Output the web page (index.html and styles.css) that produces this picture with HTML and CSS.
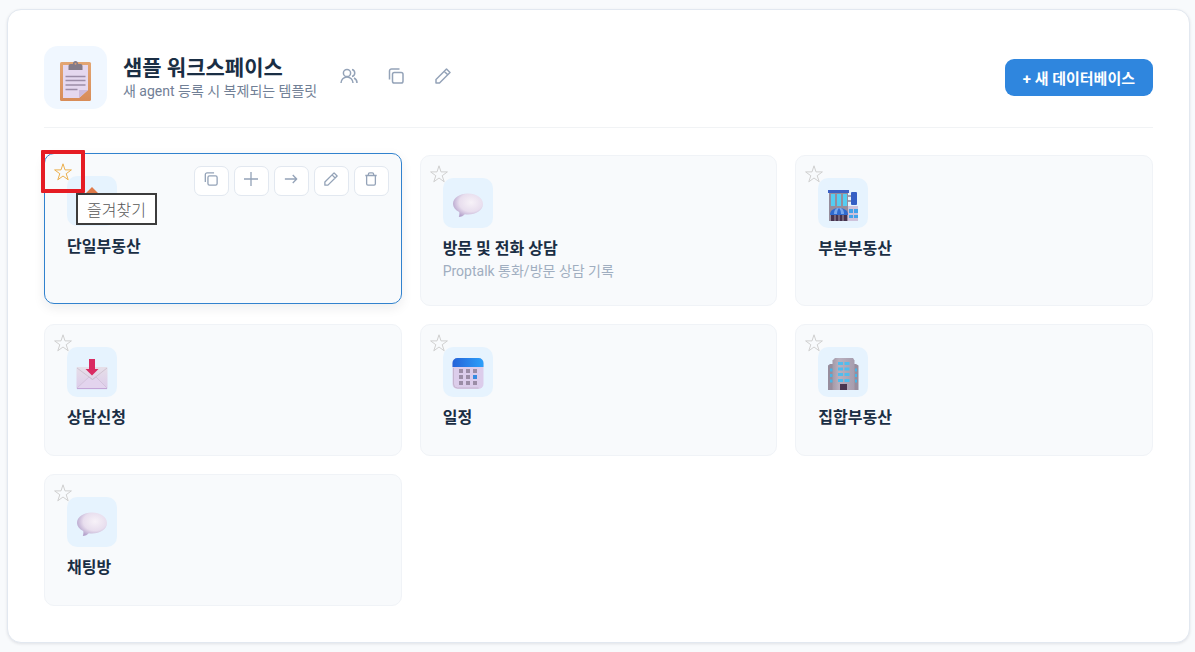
FILE: index.html
```
<!DOCTYPE html>
<html lang="ko">
<head>
  <meta charset="UTF-8">
  <meta name="viewport" content="width=device-width, initial-scale=1.0">
  <title>샘플 워크스페이스</title>
  <link rel="stylesheet" href="styles.css">
</head>
<body>

  <!-- shared icons -->
  <svg class="sprite" aria-hidden="true">
    <defs>
      <radialGradient id="bubbleFill" cx="0.6" cy="0.38" r="0.65">
        <stop offset="0" stop-color="#f7f2f8"/>
        <stop offset="0.6" stop-color="#e8deee"/>
        <stop offset="1" stop-color="#b5a3cc"/>
      </radialGradient>
      <linearGradient id="calTop"><stop offset="0" stop-color="#2563d8"/><stop offset="1" stop-color="#2ba0fa"/></linearGradient>
      <linearGradient id="mailFill" x2="0" y2="1"><stop offset="0" stop-color="#e6dfe8"/><stop offset="1" stop-color="#dccbea"/></linearGradient>
      <linearGradient id="wall"><stop offset="0" stop-color="#a39aa8"/><stop offset="0.3" stop-color="#b9b0bf"/><stop offset="1" stop-color="#a69cad"/></linearGradient>
      <linearGradient id="board" x2="0" y2="1"><stop offset="0" stop-color="#e3a673"/><stop offset="1" stop-color="#d88c58"/></linearGradient>
    </defs>
    <symbol id="star" viewBox="0 0 20 20"><path d="M10 1.8l2 6.1h6.400l-5.200 3.800 2 6.100-5.200-3.800-5.200 3.800 2-6.100-5.200-3.800H8z"/></symbol>
    <symbol id="copy" viewBox="0 0 16 16"><rect x="4.5" y="4.5" width="10.5" height="10.5" rx="1.8"/><path d="M1.5 11.5V3a2 2 0 0 1 2-2h8"/></symbol>
    <symbol id="edit" viewBox="0 0 16 16"><path d="M1 15v-3.500L11.500 1 15 4.500 4.500 15zM9.200 3.300l3.500 3.500"/></symbol>
    <symbol id="plus" viewBox="0 0 16 16"><path d="M8 0v16M0 8h16"/></symbol>
    <symbol id="arrow" viewBox="0 0 16 16"><path d="M1 8h13.500M10 3.500L14.500 8 10 12.500"/></symbol>
    <symbol id="trash" viewBox="0 0 16 16"><path d="M1.500 4h13M3 4v9.500a1.500 1.500 0 0 0 1.500 1.500h7a1.500 1.500 0 0 0 1.500-1.500V4M5 4V2.500A1.500 1.500 0 0 1 6.500 1h3A1.500 1.500 0 0 1 11 2.500V4"/></symbol>
    <symbol id="bubble" viewBox="0 0 32 32"><path fill="url(#bubbleFill)" d="M16 4.500C24.300 4.500 31 9 31 15s-6.700 10.500-15 10.500c-1 0-2.200 0-3.200-.3-1.300 1.600-3.600 2.600-6 2.900.6-1.500.8-3.300.4-5C3.500 21 1 18.200 1 15 1 9 7.700 4.500 16 4.500z"/></symbol>
  </svg>

  <main class="panel">
    <header class="workspace-header">
      <div class="workspace-icon">
        <svg viewBox="0 0 32 42" width="32" height="42">
          <rect x="0" y="3" width="31" height="39" rx="1.500" fill="url(#board)"/>
          <path d="M3 6h25v25l-9 8H3z" fill="#e5d8ef"/>
          <path d="M19 31h9l-9 8z" fill="#cdbbdb"/>
          <path d="M5.500 17.500h20M5.500 21.500h20M5.500 26h20M5.500 30.500h12" stroke="#9c8da8" stroke-width="1.300"/>
          <path d="M8.500 11V7q0-2 2-2h2.300C13 3 14 2 15.500 2S18 3 18.200 5h2.300q2 0 2 2v4z" fill="#837b88"/>
          <circle cx="15.500" cy="4.800" r="1" fill="#d49c77"/>
        </svg>
      </div>
      <div class="workspace-info">
        <h1>샘플 워크스페이스</h1>
        <p>새 agent 등록 시 복제되는 템플릿</p>
      </div>
      <div class="workspace-actions">
        <button type="button" aria-label="멤버"><svg class="icon users" viewBox="0 0 18 16"><circle cx="7" cy="5" r="3.600"/><path d="M1 15a6 6 0 0 1 12 0M12 1.500a3.600 3.600 0 0 1 0 7M14 10a5.500 5.500 0 0 1 3 5"/></svg></button>
        <button type="button" aria-label="복제"><svg class="icon"><use href="#copy"/></svg></button>
        <button type="button" aria-label="수정"><svg class="icon"><use href="#edit"/></svg></button>
      </div>
      <button type="button" class="btn-primary">+ 새 데이터베이스</button>
    </header>

    <section class="cards">
      <article class="card active">
        <button type="button" class="favorite" aria-label="즐겨찾기"><svg><use href="#star"/></svg></button>
        <div class="card-actions">
          <button type="button" aria-label="복제"><svg class="icon"><use href="#copy"/></svg></button>
          <button type="button" aria-label="추가"><svg class="icon"><use href="#plus"/></svg></button>
          <button type="button" aria-label="이동"><svg class="icon"><use href="#arrow"/></svg></button>
          <button type="button" aria-label="수정"><svg class="icon"><use href="#edit"/></svg></button>
          <button type="button" aria-label="삭제"><svg class="icon"><use href="#trash"/></svg></button>
        </div>
        <div class="card-icon">
          <svg viewBox="0 0 32 32"><path d="M6 14h20v16H6z" fill="#f4e4dc"/><path d="M16 0L31 15l-2 2L16 6 3 17l-2-2z" fill="#e07a4a"/><path d="M13 20h6v10h-6z" fill="#9c6750"/></svg>
        </div>
        <h2>단일부동산</h2>
        <span class="focus-box"></span>
        <span class="tooltip" role="tooltip">즐겨찾기</span>
      </article>

      <article class="card">
        <button type="button" class="favorite" aria-label="즐겨찾기"><svg><use href="#star"/></svg></button>
        <div class="card-icon"><svg><use href="#bubble"/></svg></div>
        <h2>방문 및 전화 상담</h2>
        <p>Proptalk 통화/방문 상담 기록</p>
      </article>

      <article class="card">
        <button type="button" class="favorite" aria-label="즐겨찾기"><svg><use href="#star"/></svg></button>
        <div class="card-icon">
          <svg viewBox="0 0 32 32">
            <path d="M2 2h19v30H2z" fill="#968d9c"/>
            <path d="M21 17h10v15H21z" fill="#cec2db"/>
            <path d="M1 1h21v3H1z" fill="#3d61c4"/>
            <path d="M4 5h4v12H4zM10 5h4v12h-4zM16 5h4v12h-4z" fill="#55cdf2"/>
            <path d="M21 7h4M21 12h4" stroke="#594b66"/>
            <rect x="24" y="3" width="6" height="13" rx="1" fill="#345ec4"/>
            <path d="M4 26h16v6H4z" fill="#46334f"/>
            <path d="M8 26v6M12 26v6M16 26v6" stroke="#a39aa8"/>
            <path d="M3 26c0-5 4-7 9-7s9 2 9 7z" fill="#2f6bd0"/>
            <path d="M7 25c0-3 1-5 3-6h4c2 1 3 3 3 6h-3c0-3-1-5-2-6-1 1-2 3-2 6z" fill="#79a8ed"/>
            <path d="M22 20h4v4h-4zM27 20h4v4h-4zM22 26h4v3h-4zM27 26h4v3h-4z" fill="#42a3ea"/>
          </svg>
        </div>
        <h2>부분부동산</h2>
      </article>

      <article class="card">
        <button type="button" class="favorite" aria-label="즐겨찾기"><svg><use href="#star"/></svg></button>
        <div class="card-icon">
          <svg viewBox="0 0 32 32">
            <rect x="0.500" y="9" width="31" height="22" rx="1" fill="url(#mailFill)"/>
            <path d="M1 30L13 19l3.500 2.500L20 19l11 11" fill="#e3d4ee" stroke="#cdbdd5" stroke-width="0.700"/>
            <path d="M1 10l15.500 11.500L31 10" fill="none" stroke="#c9bcca" stroke-width="0.800"/>
            <path d="M1 30.600h30" stroke="#c0a2d6"/>
            <path d="M13 1h6v10h3.500L16 17.500 9.500 11H13z" fill="#d92b62"/>
          </svg>
        </div>
        <h2>상담신청</h2>
      </article>

      <article class="card">
        <button type="button" class="favorite" aria-label="즐겨찾기"><svg><use href="#star"/></svg></button>
        <div class="card-icon">
          <svg viewBox="0 0 32 32">
            <rect x="0.500" y="0" width="31" height="31" rx="5" fill="#dccdeb"/>
            <path d="M.5 9V5a5 5 0 0 1 5-5h21a5 5 0 0 1 5 5v4z" fill="url(#calTop)"/>
            <path d="M1.500 10v16a4 4 0 0 0 4 4h21" fill="none" stroke="#c5b6cf"/>
            <path d="M7 11h4v4H7zM14 11h4v4h-4zM21 11h4v4h-4zM7 17h4v4H7zM14 17h4v4h-4zM7 23h4v4H7zM14 23h4v4h-4zM21 23h4v4h-4z" fill="#9b8da6"/>
            <path d="M21 17h4v4h-4z" fill="#388be0"/>
          </svg>
        </div>
        <h2>일정</h2>
      </article>

      <article class="card">
        <button type="button" class="favorite" aria-label="즐겨찾기"><svg><use href="#star"/></svg></button>
        <div class="card-icon">
          <svg viewBox="0 0 32 32">
            <path d="M1 7.500L3 6h4v26H1zM25 6h4l2.500 1.500V32H25z" fill="#978d9d"/>
            <path d="M5.500 32V2.500L8 0h18l1.500 2.500V32z" fill="url(#wall)"/>
            <path d="M11 4h5v3h-5zM17.500 4h5v3h-5zM11 9.500h5v3h-5zM17.500 9.500h5v3h-5zM11 15h5v3h-5zM17.500 15h5v3h-5zM11 21h5v3h-5zM17.500 21h5v3h-5z" fill="#50bdee"/>
            <path d="M3 10.500h2.500v3H3zM3 16h2.500v3H3zM3 21.500h2.500v3H3zM28 10.500h2v3h-2zM28 16h2v3h-2zM28 21.500h2v3h-2z" fill="#4ab4e4"/>
            <path d="M13 26h7v6h-7z" fill="#49364f"/>
          </svg>
        </div>
        <h2>집합부동산</h2>
      </article>

      <article class="card">
        <button type="button" class="favorite" aria-label="즐겨찾기"><svg><use href="#star"/></svg></button>
        <div class="card-icon"><svg><use href="#bubble"/></svg></div>
        <h2>채팅방</h2>
      </article>
    </section>
  </main>

</body>
</html>
```
FILE: styles.css
```
* { margin: 0; padding: 0; box-sizing: border-box; }
body { font-family: Roboto, "Noto Sans CJK KR", sans-serif; background: #f8fafc; color: #1a2e44; padding: 9px 5px 9px 7px; }
button { font-family: inherit; border: none; background: none; cursor: pointer; }
svg { display: block; }
.sprite { position: absolute; width: 0; height: 0; }
.icon { width: 16px; height: 16px; fill: none; stroke: #94a3b8; stroke-width: 1.5; stroke-linejoin: round; }
.icon.users { width: 18px; }

.panel { background: #fff; border: 1px solid #e2e8f0; border-radius: 14px; padding: 36px; box-shadow: 0 1px 3px rgba(15,23,42,0.1); }

.workspace-header { display: flex; align-items: center; gap: 16px; padding-bottom: 18px; margin-bottom: 27px; border-bottom: 1px solid #f1f3f5; }
.workspace-icon { width: 63px; height: 63px; border-radius: 14px; background: #f0f7ff; display: flex; align-items: center; justify-content: center; padding-top: 4px; }
.workspace-info h1 { font-size: 21px; line-height: 26px; font-weight: 700; }
.workspace-info p { font-size: 14px; line-height: 20px; color: #718096; }
.workspace-actions { display: flex; gap: 15px; padding-bottom: 4px; }
.workspace-actions button { width: 32px; height: 32px; display: flex; align-items: center; justify-content: center; }
.btn-primary { margin-left: auto; height: 37px; padding: 0 18px; border-radius: 9px; background: #2f86de; color: #fff; font-size: 15px; font-weight: 700; }

.cards { display: grid; grid-template-columns: repeat(3, 1fr); gap: 18px; }
.card { position: relative; min-height: 132px; background: #f8fafc; border: 1px solid #f0f3f7; border-radius: 10px; padding: 22px 22px 23px; }
.card.active { border-color: #3182ce; transform: translateY(-2px); box-shadow: 0 4px 12px rgba(15,23,42,0.08); }
.card-icon { width: 50px; height: 50px; margin-bottom: 9px; border-radius: 10px; background: #e6f3fe; display: flex; align-items: center; justify-content: center; }
.card-icon svg { width: 32px; height: 32px; margin-top: 4px; }
.card h2 { font-size: 16px; line-height: 24px; font-weight: 600; }
.card p { font-size: 14px; line-height: 21px; color: #a0aec0; }

.favorite { position: absolute; left: 8px; top: 8px; width: 20px; height: 20px; }
.favorite svg { width: 20px; height: 20px; fill: none; stroke: #d0d0d0; }
.active .favorite svg { stroke: #ecb04e; }

.card-actions { position: absolute; top: 12px; right: 12px; display: flex; gap: 5px; }
.card-actions button { width: 35px; height: 30px; padding-bottom: 4px; background: #fff; border: 1px solid #e2e8f0; border-radius: 7px; display: flex; align-items: center; justify-content: center; }
.card-actions .icon { width: 14px; height: 14px; }

.focus-box { position: absolute; left: -4px; top: -4px; width: 44px; height: 43px; border: 4px solid #e51c24; border-radius: 1px; pointer-events: none; }
.tooltip { position: absolute; left: 31px; top: 39px; padding: 0 9px; border: 2px solid #3c3c3c; background: #fff; color: #575757; font-family: "Noto Sans CJK KR", sans-serif; font-size: 16px; font-weight: 300; line-height: 28px; white-space: nowrap; }
```
